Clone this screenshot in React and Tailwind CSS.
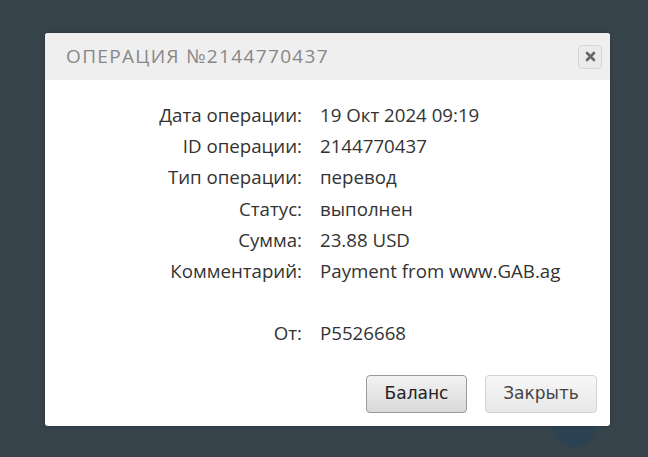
import React from "react";

const rows = [
  ["Дата операции:", "19 Окт 2024 09:19"],
  ["ID операции:", "2144770437"],
  ["Тип операции:", "перевод"],
  ["Статус:", "выполнен"],
  ["Сумма:", "23.88 USD"],
  ["Комментарий:", "Payment from www.GAB.ag"],
];

function App() {
  return (
    <div className="relative w-[648px] h-[457px] bg-[#36434b] overflow-hidden font-['Open_Sans',sans-serif]">
      {/* scroll-to-top button behind the modal */}
      <div className="absolute left-[553px] top-[404px] w-[43px] h-[43px] rounded-full bg-[#2b4253]"></div>

      {/* Modal */}
      <div className="absolute left-[45px] top-[33px] w-[565px] h-[393px] bg-white rounded-[3px] overflow-hidden shadow-[0_0_3px_rgba(0,0,0,0.3)] flex flex-col">
        <div className="h-[47px] bg-[#efefef] flex items-center justify-between pl-[21px] pr-[8px]">
          <span className="text-[19px] tracking-[1.35px] text-[#878787] uppercase">
            Операция №2144770437
          </span>
          <button className="w-[24px] h-[24px] rounded-[4px] border border-[#d6d6d6] bg-[#ebebeb] flex items-center justify-center">
            <svg width="11" height="11" viewBox="0 0 11 11">
              <path d="M2 2L9 9M9 2L2 9" stroke="#666" strokeWidth="2.6" strokeLinecap="round" />
            </svg>
          </button>
        </div>

        <div className="pt-[19px] text-[18.7px] text-[#333]">
          {rows.map(([label, value]) => (
            <div key={label} className="flex h-[31.3px] items-center">
              <div className="w-[257px] text-right font-medium">{label}</div>
              <div className="pl-[18px]">{value}</div>
            </div>
          ))}
          <div className="h-[31px]"></div>
          <div className="flex h-[31px] items-center">
            <div className="w-[257px] text-right font-medium">От:</div>
            <div className="pl-[18px]">P5526668</div>
          </div>
        </div>

        <div className="mt-auto mb-[13px] flex justify-end gap-[18px] pr-[13px] font-['DejaVu_Sans',sans-serif] text-[17px]">
          <button className="w-[101px] h-[38px] rounded-[4px] border border-[#9a9a9a] bg-gradient-to-b from-[#f3f3f3] to-[#d9d9d9] text-[#222]">
            Баланс
          </button>
          <button className="w-[112px] h-[38px] rounded-[4px] border border-[#d2d2d2] bg-gradient-to-b from-[#f7f7f7] to-[#e8e8e8] text-[#444]">
            Закрыть
          </button>
        </div>
      </div>
    </div>
  );
}

export default App;
